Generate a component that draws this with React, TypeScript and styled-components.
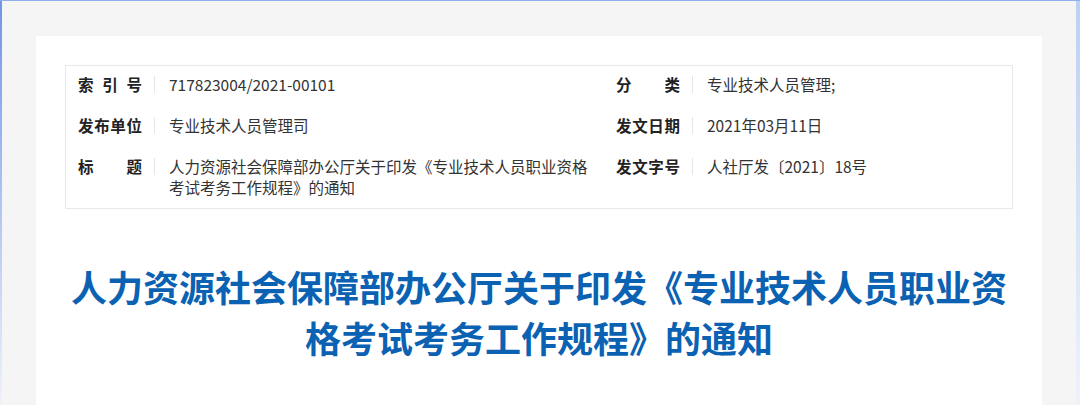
import React from "react";
import styled, { createGlobalStyle } from "styled-components";

const Global = createGlobalStyle`
  html, body { margin: 0; padding: 0; }
  body {
    font-family: "Noto Sans CJK SC", "Noto Sans", sans-serif;
    background: #f5f5f5;
  }
`;

const Frame = styled.div`
  box-sizing: border-box;
  width: 1080px;
  height: 405px;
  overflow: hidden;
  padding: 35px 38px 0 36px;
  border-top: 1px solid #8fb0ea;
  background:
    linear-gradient(180deg, #6f95e6 0%, #a9c0f0 45%, #eef2fb 100%) left top / 2px 100% no-repeat,
    linear-gradient(180deg, #bcd0f2 0%, #d6e2f7 50%, #eef2fb 100%) right top / 4px 100% no-repeat,
    #f5f5f5;
`;

const Card = styled.main`
  background: #ffffff;
  height: 100%;
  box-sizing: border-box;
  padding: 29px 29px 0 29px;
`;

const InfoBox = styled.section`
  box-sizing: border-box;
  border: 1px solid #e8e8e8;
  padding: 8px 12px 10px 12px;
  display: grid;
  grid-template-columns: 538px 1fr;
  row-gap: 20px;
  font-size: 15.5px;
  line-height: 21px;
  color: #333;
`;

const Item = styled.div`
  display: flex;
  align-items: flex-start;
  padding-right: 20px;
`;

const Label = styled.span`
  flex: 0 0 64px;
  width: 64px;
  font-weight: 700;
  color: #222;
  text-align: justify;
  text-align-last: justify;
  white-space: nowrap;
`;

const Sep = styled.span`
  flex: 0 0 1px;
  height: 17px;
  margin: 2px 14px 0 12px;
  background: #e6e6e6;
`;

const Value = styled.span`
  flex: 1;
  color: #333;
`;

const Title = styled.h1`
  width: 948px;
  margin: 52px auto 0 auto;
  text-align: center;
  font-size: 36px;
  line-height: 51px;
  font-weight: 700;
  color: #0b62b2;
  letter-spacing: 0;
`;

const rows: [string, string][] = [
  ["索引号", "717823004/2021-00101"],
  ["分类", "专业技术人员管理;"],
  ["发布单位", "专业技术人员管理司"],
  ["发文日期", "2021年03月11日"],
  ["标题", "人力资源社会保障部办公厅关于印发《专业技术人员职业资格考试考务工作规程》的通知"],
  ["发文字号", "人社厅发〔2021〕18号"],
];

const spread = (s: string) => (s.length < 4 ? s.split("").join(" ") : s);

export default function App() {
  return (
    <>
      <Global />
      <Frame>
        <Card>
          <InfoBox>
            {rows.map(([l, v]) => (
              <Item key={l}>
                <Label>{spread(l)}</Label>
                <Sep />
                <Value>{v}</Value>
              </Item>
            ))}
          </InfoBox>
          <Title>人力资源社会保障部办公厅关于印发《专业技术人员职业资格考试考务工作规程》的通知</Title>
        </Card>
      </Frame>
    </>
  );
}
